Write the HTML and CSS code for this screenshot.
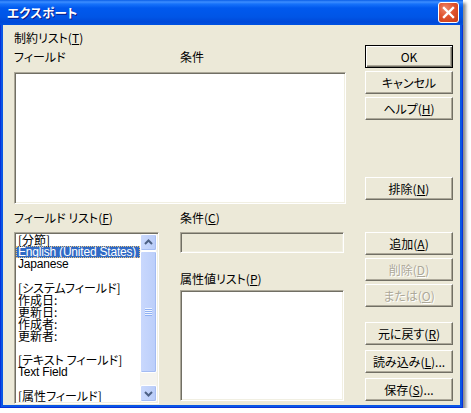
FILE: index.html
```html
<!DOCTYPE html>
<html lang="ja">
<head>
<meta charset="utf-8">
<title>エクスポート</title>
<link rel="stylesheet" href="styles.css">
</head>
<body>
<div class="window">
  <div class="titlebar">
    <span class="title">エクスポート</span>
    <div class="close">
      <svg width="21" height="21" viewBox="0 0 21 21"><path d="M6 6 L15 15 M15 6 L6 15" stroke="#fff" stroke-width="2.4" stroke-linecap="square"/></svg>
    </div>
  </div>
  <div class="client">
    <div class="main">
      <div class="label l-top">制約リスト(<u>T</u>)</div>
      <div class="cols-head"><span class="head-field">フィールド</span><span>条件</span></div>
      <div class="listbox lb-constraints"></div>
      <div class="lower">
        <div class="col-fields">
          <div class="label">フィールド リスト(<u>F</u>)</div>
          <div class="listbox lb-fields">
            <div class="items">
              <div class="item">[分節]</div>
              <div class="item latin selected">English (United States)</div>
              <div class="item latin">Japanese</div>
              <div class="item"></div>
              <div class="item">[システムフィールド]</div>
              <div class="item">作成日:</div>
              <div class="item">更新日:</div>
              <div class="item">作成者:</div>
              <div class="item">更新者:</div>
              <div class="item"></div>
              <div class="item">[テキスト フィールド]</div>
              <div class="item latin">Text Field</div>
              <div class="item"></div>
              <div class="item">[属性フィールド]</div>
            </div>
            <div class="vscroll">
              <div class="sbtn"><svg width="15" height="15" viewBox="0 0 15 15"><path d="M4 9 L7.5 5.5 L11 9" fill="none" stroke="#4D6185" stroke-width="2"/></svg></div>
              <div class="thumb"><div class="grip"></div></div>
              <div class="track"></div>
              <div class="sbtn"><svg width="15" height="15" viewBox="0 0 15 15"><path d="M4 6 L7.5 9.5 L11 6" fill="none" stroke="#4D6185" stroke-width="2"/></svg></div>
            </div>
          </div>
        </div>
        <div class="col-cond">
          <div class="label">条件(<u>C</u>)</div>
          <div class="textbox"></div>
          <div class="label l-attr">属性値リスト(<u>P</u>)</div>
          <div class="listbox lb-values"></div>
        </div>
      </div>
    </div>
    <div class="buttons">
      <div class="btn default b-ok">OK</div>
      <div class="btn b-gap3">キャンセル</div>
      <div class="btn b-gap3">ヘルプ(<u>H</u>)</div>
      <div class="btn b-exclude">排除(<u>N</u>)</div>
      <div class="btn b-add">追加(<u>A</u>)</div>
      <div class="btn disabled b-gap3">削除(<u>D</u>)</div>
      <div class="btn disabled b-gap3">または(<u>O</u>)</div>
      <div class="btn b-revert">元に戻す(<u>R</u>)</div>
      <div class="btn b-gap5">読み込み(<u>L</u>)...</div>
      <div class="btn b-gap5">保存(<u>S</u>)...</div>
    </div>
  </div>
</div>
</body>
</html>
```
FILE: styles.css
```css
html, body {
  margin: 0;
  background: #ffffff;
}
body {
  font-family: "Noto Sans CJK JP", "Liberation Sans", sans-serif;
  font-size: 12px;
  font-feature-settings: "palt";
  color: #000;
}
u { text-decoration: underline; text-underline-offset: 1px; }

.window {
  width: 463px;
  height: 408px;
  box-sizing: border-box;
  padding: 0 3px 3px 3px;
  background: #0A56E4;
  box-shadow: inset 1px 0 #0831D9, inset -1px -1px #0831D9, 3px 3px 3px rgba(0,0,0,0.45);
  display: flex;
  flex-direction: column;
}

.titlebar {
  height: 25px;
  margin: 0 -3px;
  padding-left: 7px;
  display: flex;
  align-items: center;
  background: linear-gradient(to bottom, #0A5EE7 0px, #3D8EFF 2px, #1672FA 4px, #0059EE 8px, #0055E6 17px, #0049D9 22px, #0052E2 25px);
}
.title {
  color: #fff;
  font-weight: bold;
  font-size: 12.5px;
  line-height: 16px;
  text-shadow: 1px 1px #0A1883;
  letter-spacing: 0.2px;
}
.close {
  margin-left: auto;
  margin-right: 4px;
  width: 21px;
  height: 21px;
  box-sizing: border-box;
  border: 1px solid #fff;
  border-radius: 3px;
  background: radial-gradient(circle at 35% 30%, #EE8A6C 0%, #E0542F 45%, #C73A14 100%);
  display: flex;
  align-items: center;
  justify-content: center;
}
.close svg { display: block; margin: -1px; }

.client {
  flex: 1;
  background: #ECE9D8;
  display: flex;
}

.main {
  width: 332px;
  padding-left: 11px;
  padding-top: 6px;
}
.label { line-height: 14px; white-space: nowrap; }
.cols-head {
  margin-top: 5px;
  line-height: 14px;
  display: flex;
}
.head-field { width: 166px; }

.listbox {
  box-sizing: border-box;
  background: #fff;
  border: 1px solid;
  border-color: #ACA899 #fff #fff #ACA899;
  box-shadow: inset 1px 1px #716F64, inset -1px -1px #F1EFE2;
}
.lb-constraints {
  margin-top: 8px;
  width: 332px;
  height: 132px;
}

.lower {
  margin-top: 7px;
  display: flex;
}
.col-fields { width: 145px; }
.col-cond { width: 164px; margin-left: 21px; }

.lb-fields {
  margin-top: 7px;
  height: 172px;
  padding: 1px;
  display: flex;
  overflow: hidden;
}
.items {
  flex: 1;
  overflow: hidden;
}
.item {
  height: 12px;
  line-height: 12px;
  padding-left: 2px;
  white-space: nowrap;
}
.item.latin {
  font-family: "Liberation Sans", "Noto Sans CJK JP", sans-serif;
  letter-spacing: -0.2px;
}
.item.selected {
  background: #316AC5;
  color: #fff;
  outline: 1px dotted #E8C27A;
  outline-offset: -1px;
}

.vscroll {
  width: 17px;
  display: flex;
  flex-direction: column;
  background: #F5F4EF;
}
.sbtn {
  height: 17px;
  box-sizing: border-box;
  border: 1px solid #fff;
  border-radius: 2px;
  background: linear-gradient(to right, #CAD9FD, #B9CCF8);
  box-shadow: inset -1px -1px #A6BDF2;
  display: flex;
  align-items: center;
  justify-content: center;
}
.sbtn svg { display: block; }
.thumb {
  height: 122px;
  box-sizing: border-box;
  border: 1px solid #fff;
  border-radius: 2px;
  background: linear-gradient(to right, #C9D8FD, #BBCEFA);
  box-shadow: inset -1px -1px #A4BCF3;
  display: flex;
  align-items: center;
  justify-content: center;
}
.grip {
  width: 7px;
  height: 8px;
  background: repeating-linear-gradient(to bottom, #EEF4FF 0, #EEF4FF 1px, #8FB0F3 1px, #8FB0F3 2px);
}
.track { flex: 1; }

.textbox {
  margin-top: 7px;
  height: 21px;
  box-sizing: border-box;
  background: #ECE9D8;
  border: 1px solid;
  border-color: #ACA899 #fff #fff #ACA899;
  box-shadow: inset 1px 1px #716F64, inset -1px -1px #F1EFE2;
}
.l-attr { margin-top: 19px; }
.lb-values {
  margin-top: 4px;
  height: 111px;
}

.buttons {
  margin-left: 19px;
  width: 88px;
  padding-top: 20px;
  display: flex;
  flex-direction: column;
}
.btn {
  height: 23px;
  box-sizing: border-box;
  border: 1px solid;
  border-color: #fff #716F64 #716F64 #fff;
  box-shadow: inset -1px -1px #ACA899;
  background: #ECE9D8;
  display: flex;
  align-items: center;
  justify-content: center;
  line-height: 14px;
  white-space: nowrap;
}
.btn.default {
  border: 1px solid #000;
  box-shadow: inset 1px 1px #fff, inset -1px -1px #716F64, inset -2px -2px #ACA899;
}
.btn.disabled {
  color: #ACA899;
  text-shadow: 1px 1px #fff;
}
.b-gap3 { margin-top: 3px; }
.b-gap5 { margin-top: 5px; }
.b-exclude { margin-top: 57px; }
.b-add { margin-top: 32px; }
.b-revert { margin-top: 15px; }
```
